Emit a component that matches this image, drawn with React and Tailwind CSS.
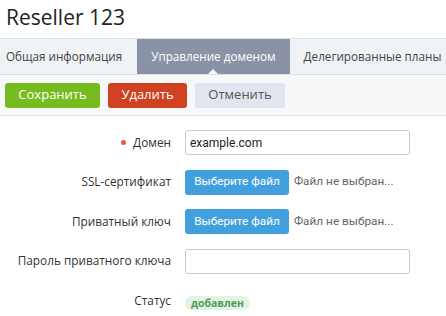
import React from 'react';

const tabs = [
    { label: 'Общая информация', cls: 'pl-[6px] pr-[15px]' },
    { label: 'Управление доменом', active: true, cls: 'px-[14px]' },
    { label: 'Делегированные планы', cls: 'px-[14px]' },
];

const FileField = () => (
    <div className="flex items-center gap-[5px]">
        <button className="h-[25px] w-[104px] rounded-[3px] bg-[#419fdd] text-white text-[11.8px] font-['Roboto',sans-serif]">
            Выберите файл
        </button>
        <span className="text-[11.8px] text-[#666] font-['Roboto',sans-serif] whitespace-nowrap">Файл не выбран...</span>
    </div>
);

const Row = ({ label, required, children }) => (
    <div className="flex items-center h-[25px]">
        <div className="w-[171px] shrink-0 flex justify-end items-center gap-[7px] text-[11.8px] text-[#333]">
            {required && <span className="w-[5px] h-[5px] rounded-full bg-[#e8563f]" />}
            <span>{label}</span>
        </div>
        <div className="ml-[14px]">{children}</div>
    </div>
);

export default function App() {
    return (
        <div className="w-[446px] h-[316px] bg-white overflow-hidden font-['Open_Sans',sans-serif]">
            <div className="h-[38px] pl-[6px] pt-[2px] text-[21px] text-[#222] leading-[30px]">Reseller 123</div>

            <div className="flex h-[37px] bg-[#f0f3f6] border-y border-[#dde1e6] text-[11.7px] whitespace-nowrap">
                {tabs.map((t) => (
                    <div
                        key={t.label}
                        className={`relative flex items-center ${t.cls} ${t.active ? 'bg-[#8a93a5] text-white' : 'text-[#444]'}`}
                    >
                        {t.label}
                        {t.active && (
                            <span className="absolute bottom-0 left-1/2 -translate-x-1/2 w-0 h-0 border-x-[5px] border-x-transparent border-b-[5px] border-b-[#f6f8fa]" />
                        )}
                    </div>
                ))}
            </div>

            <div className="flex items-center gap-[8px] h-[41px] px-[5px] bg-[#f6f8fa] border-b border-[#e3e6ea] text-[13px]">
                <button className="h-[25px] w-[95px] rounded-[3px] bg-[#76bc1e] text-white">Сохранить</button>
                <button className="h-[25px] w-[79px] rounded-[3px] bg-[#d04122] text-white">Удалить</button>
                <button className="h-[25px] w-[90px] rounded-[3px] bg-[#e1e6ee] text-[#555]">Отменить</button>
            </div>

            <div className="flex flex-col gap-[14.5px] pt-[14px]">
                <Row label="Домен" required>
                    <div className="w-[225px] h-[25px] border border-[#c5c9d0] rounded-[3px] px-[4px] flex items-center text-[12px] text-[#222] font-['Roboto',sans-serif]">
                        example.com
                    </div>
                </Row>
                <Row label="SSL-сертификат">
                    <FileField />
                </Row>
                <Row label="Приватный ключ">
                    <FileField />
                </Row>
                <Row label="Пароль приватного ключа">
                    <div className="w-[225px] h-[25px] border border-[#c5c9d0] rounded-[3px]" />
                </Row>
                <Row label="Статус">
                    <span className="inline-flex items-center h-[14px] px-[6px] rounded-full bg-[#e2f2e5] text-[#4b9e5c] text-[10.5px] font-bold">
                        добавлен
                    </span>
                </Row>
            </div>
        </div>
    );
}
